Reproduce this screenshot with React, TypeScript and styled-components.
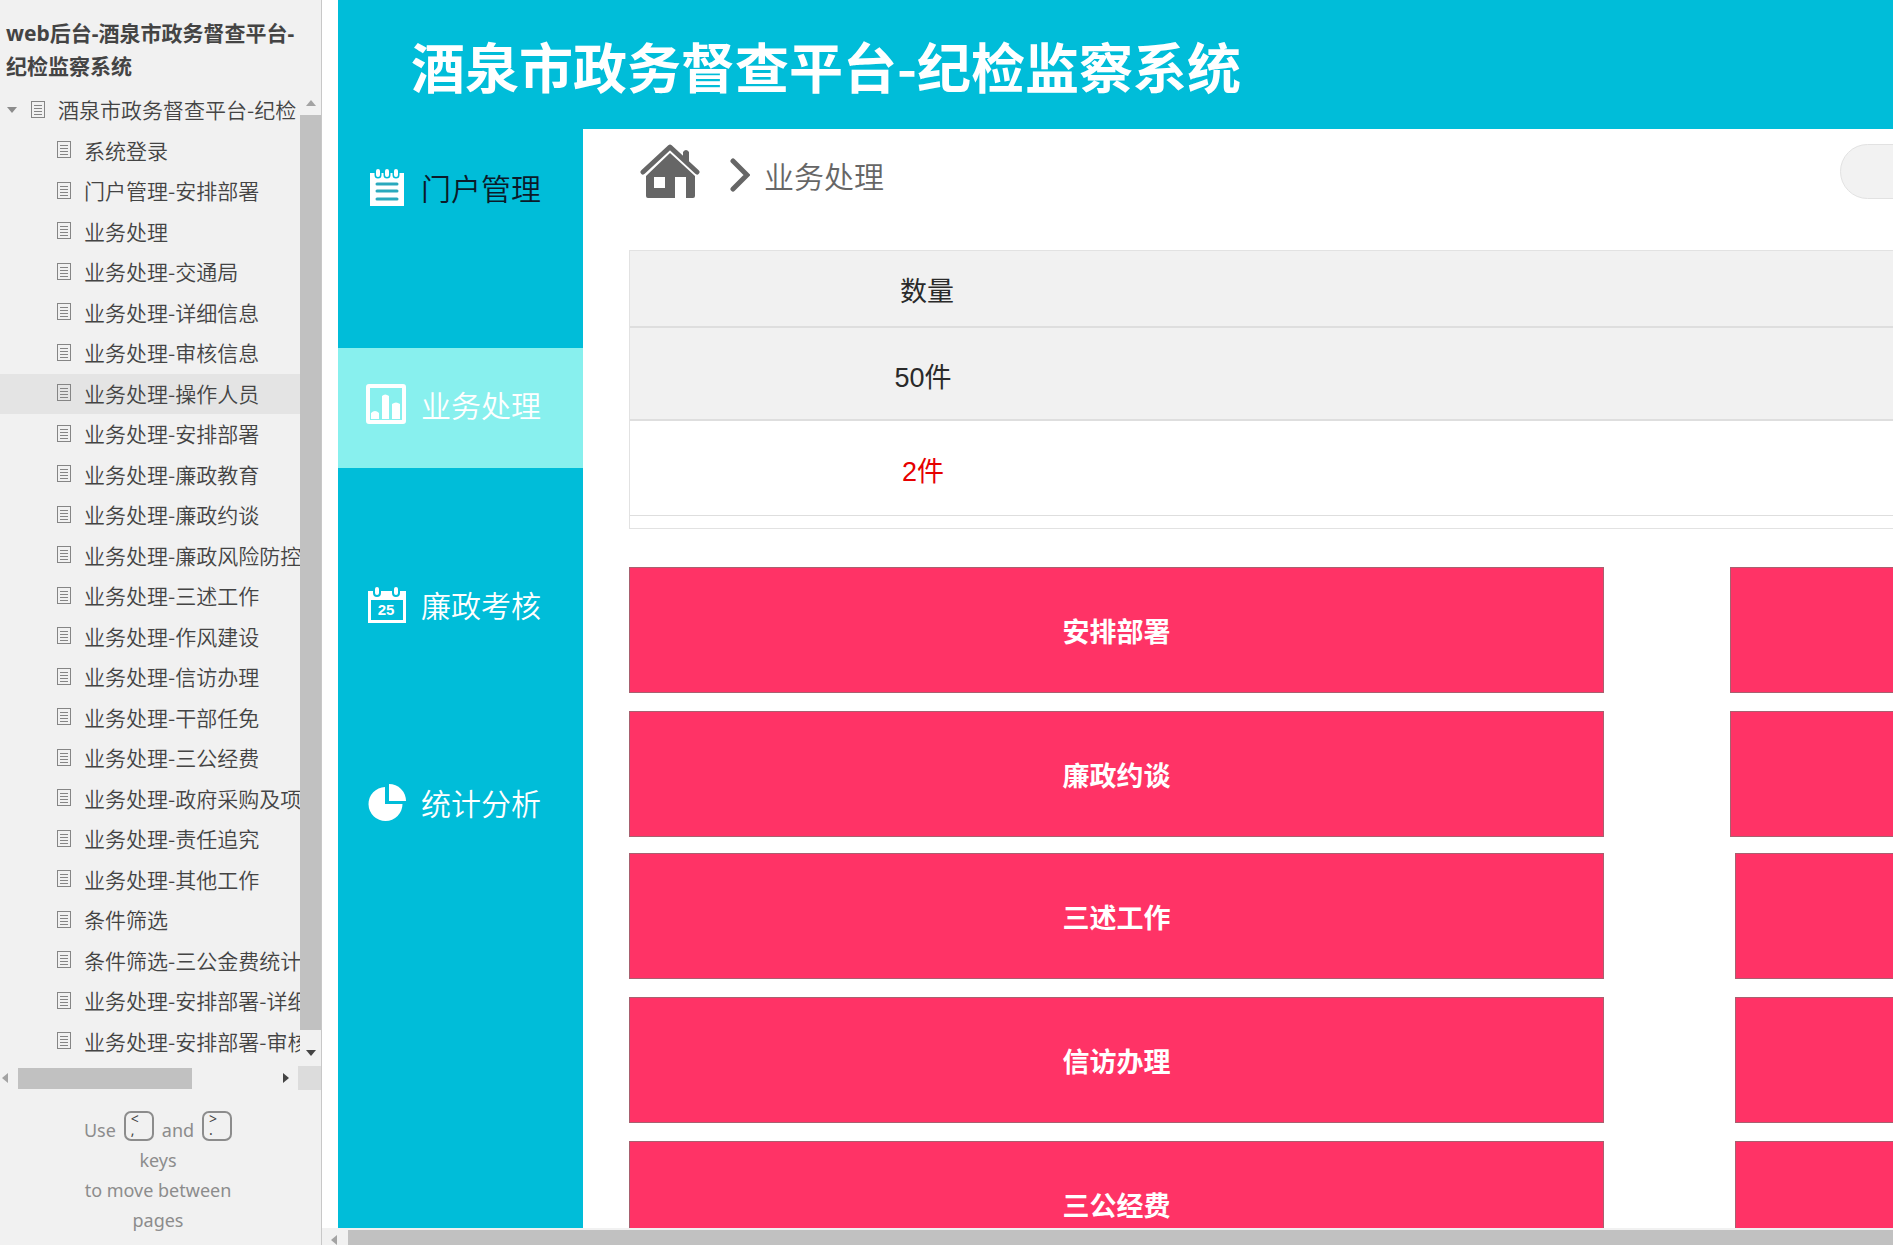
import React from 'react';
import styled, { createGlobalStyle } from 'styled-components';

const ui = '"Noto Sans", "Noto Sans CJK SC", sans-serif';
const cjk = '"Noto Sans CJK SC", sans-serif';
const teal = '#00bdd9';

const GlobalStyle = createGlobalStyle`
  *, *::before, *::after { box-sizing: border-box; }
  body { margin: 0; background: #fff; font-family: ${ui}; overflow: hidden; }
  h1, h2, ul, p { margin: 0; padding: 0; }
  ul { list-style: none; }
  a { color: inherit; text-decoration: none; }
  button { margin: 0; padding: 0; border: 0; background: none; font: inherit; color: inherit; }
  svg { display: block; flex: none; }
`;

const Shell = styled.div`
  display: flex;
  height: 100vh;
`;

/* ---------- sitemap sidebar ---------- */

const Sidebar = styled.aside`
  display: flex;
  flex: none;
  flex-direction: column;
  width: 322px;
  border-right: 1px solid #c8c8c8;
  background: #f1f1f1;
`;

const ProjectName = styled.h2`
  padding: 17px 6px 7px;
  font-size: 21px;
  line-height: 33px;
  color: #444;
`;

const TreePane = styled.div`
  display: flex;
  flex: 1;
  min-height: 0;
`;

const Tree = styled.ul`
  display: flex;
  flex: 1;
  flex-direction: column;
  min-width: 0;
  padding-bottom: 4px;
  overflow: hidden;
`;

const TreeRow = styled.li<{ $root?: boolean; $hover?: boolean }>`
  display: flex;
  flex: 1;
  align-items: center;
  min-height: 0;
  padding-left: ${(p) => (p.$root ? '7px' : '57px')};
  background: ${(p) => (p.$hover ? '#e4e4e4' : 'transparent')};
`;

const Toggle = styled.button`
  width: 24px;
`;

const TreeLink = styled.a`
  display: flex;
  align-items: center;
  gap: 13px;
  padding-bottom: 2px;
  font-family: ${cjk};
  font-size: 21px;
  line-height: 32px;
  font-weight: 350;
  white-space: nowrap;
  color: #444;
`;

const VTrack = styled.div`
  display: flex;
  flex: none;
  flex-direction: column;
  align-items: center;
  justify-content: space-between;
  width: 21px;
  padding: 10px 0;
`;

const VThumb = styled.div`
  flex: 1;
  width: 21px;
  margin: 9px 0 20px;
  background: #c1c1c1;
`;

const HTrack = styled.div`
  display: flex;
  flex: none;
  align-items: center;
  height: 24px;
  padding-left: 2px;
`;

const HThumb = styled.div`
  width: 174px;
  height: 21px;
  margin: 0 auto 0 10px;
  background: #c1c1c1;
`;

const Corner = styled.div`
  width: 23px;
  height: 24px;
  margin-left: 9px;
  background: #dcdcdc;
`;

const KeyHint = styled.p`
  padding: 17px 61px 10px 56px;
  font-size: 18px;
  line-height: 30px;
  text-align: center;
  color: #8c8c8c;
`;

const HintKeys = styled.span`
  display: flex;
  align-items: center;
  justify-content: center;
  gap: 8px;
  height: 38px;
`;

const HintWord = styled.span`
  padding-top: 8px;
`;

const Key = styled.kbd`
  display: flex;
  flex-direction: column;
  justify-content: space-between;
  width: 30px;
  height: 30px;
  padding: 1px 5px 4px;
  border: 2px solid #8c8c8c;
  border-radius: 7px;
  font-family: ${ui};
  font-size: 14px;
  line-height: 10px;
  text-align: left;
  color: #444;
`;

/* ---------- prototype page ---------- */

const Main = styled.main`
  display: flex;
  flex: 1;
  flex-direction: column;
  min-width: 0;
`;

const Viewport = styled.div`
  flex: 1;
  min-height: 0;
  padding-left: 16px;
  overflow: hidden;
`;

const Canvas = styled.div`
  display: flex;
  flex-direction: column;
  width: 180%;
  min-height: 100%;
`;

const Banner = styled.header`
  padding: 29px 73px 26px;
  background: ${teal};
`;

const BannerTitle = styled.h1`
  font-family: ${cjk};
  font-size: 54px;
  line-height: 74px;
  font-weight: 700;
  white-space: nowrap;
  color: #fff;
`;

const Body = styled.div`
  display: flex;
  flex: 1;
`;

const Nav = styled.nav`
  flex: none;
  width: 245px;
  background: ${teal};
`;

const NavList = styled.ul`
  display: flex;
  flex-direction: column;
  gap: 78px;
`;

const NavItem = styled.li<{ $active?: boolean }>`
  background: ${(p) => (p.$active ? '#88f0ee' : 'transparent')};

  &:first-child { margin-bottom: 21px; }
`;

const NavLink = styled.a<{ $dark?: boolean; $active?: boolean }>`
  display: flex;
  align-items: center;
  gap: 15px;
  height: 120px;
  padding: 0 0 ${(p) => (p.$active ? '8px' : '4px')} 28px;
  font-family: ${cjk};
  font-size: 30px;
  line-height: 40px;
  font-weight: 350;
  color: ${(p) => (p.$dark ? '#0b1a2a' : '#fff')};
`;

const Content = styled.section`
  flex: 1;
  min-width: 0;
  padding-left: 46px;
`;

const TopRow = styled.div`
  display: flex;
  align-items: flex-start;
  height: 121px;
  padding: 15px 0 0 11px;
`;

const Crumbs = styled.div`
  display: flex;
  align-items: flex-start;
  gap: 14px;
  width: 1200px;
  font-family: ${cjk};
  font-size: 30px;
  line-height: 54px;
  color: #666;
`;

const CrumbText = styled.span`
  display: flex;
  align-items: center;
  gap: 14px;
  padding-top: 4px;
  font-weight: 350;
`;

const HomeLink = styled.a`
  margin-right: 16px;
`;

const Search = styled.input`
  width: 420px;
  height: 55px;
  padding: 0 24px;
  border: 1px solid #e2e2e2;
  border-radius: 28px;
  background: #f2f2f2;
  font: 22px ${ui};
`;

const Table = styled.table`
  width: 100%;
  border: 1px solid #e2e2e2;
  border-spacing: 0;
  table-layout: fixed;
  font-family: "Liberation Sans", "Noto Sans CJK SC", sans-serif;
  font-size: 27px;
  line-height: 36px;
  text-align: center;
  color: #2a2a2a;
`;

const CountCol = styled.col`
  width: 586px;
`;

const HeadCell = styled.th`
  height: 77px;
  padding: 6px 0 0 8px;
  border-bottom: 2px solid #dedede;
  background: #f1f1f1;
  font-weight: 400;
`;

const Cell = styled.td<{ $tone?: 'shaded' | 'alert' }>`
  height: ${(p) => (p.$tone === 'shaded' ? '93px' : '95px')};
  padding: 8px 0 0;
  border-bottom: ${(p) => (p.$tone === 'shaded' ? '2px' : '1px')} solid #dedede;
  background: ${(p) => (p.$tone === 'shaded' ? '#f1f1f1' : '#fff')};
  color: ${(p) => (p.$tone === 'alert' ? '#e60000' : 'inherit')};
`;

const TailCell = styled.td`
  height: 12px;
  padding: 0;
`;

const Groups = styled.div`
  display: flex;
  flex-direction: column;
  gap: 16px;
  padding-top: 38px;
`;

const CardGroup = styled.div<{ $gap: number }>`
  display: grid;
  grid-template-columns: 975px 975px;
  gap: 18px ${(p) => p.$gap}px;
`;

const Card = styled.button`
  height: 126px;
  padding-top: 2px;
  border: 1px solid #a8606f;
  background: #ff3366;
  font-family: ${cjk};
  font-size: 27px;
  line-height: 36px;
  font-weight: 700;
  color: #fff;
`;

const PageTrack = styled.div`
  display: flex;
  flex: none;
  align-items: flex-end;
  gap: 11px;
  height: 17px;
  padding-left: 9px;
  background: #f1f1f1;
`;

const PageThumb = styled.div`
  flex: 1;
  height: 15px;
  background: #c1c1c1;
`;

/* ---------- drawings ---------- */

const Arrow = ({ dir, color }: { dir: 'up' | 'down' | 'left' | 'right'; color: string }) => {
  const flat = dir === 'up' || dir === 'down';
  const points = {
    up: '0,6 10,6 5,0',
    down: '0,0 10,0 5,6',
    left: '6,0 6,10 0,5',
    right: '0,0 0,10 6,5',
  }[dir];
  return (
    <svg width={flat ? 10 : 6} height={flat ? 6 : 10} aria-hidden="true">
      <polygon points={points} fill={color} />
    </svg>
  );
};

const PageIcon = () => (
  <svg width="14" height="17" viewBox="0 0 14 17" fill="none" stroke="#858585" aria-hidden="true">
    <rect x="0.5" y="0.5" width="13" height="16" />
    <path d="M3 4.5h8M3 7.5h8M3 10.5h8M3 13.5h8" />
  </svg>
);

const NotepadIcon = () => (
  <svg width="40" height="40" viewBox="0 0 40 40" aria-hidden="true">
    <path fill="#fff" d="M4 6h34v33H4z" />
    <g stroke={teal} strokeWidth="7" strokeLinecap="round">
      <path d="M12 4v4M21 4v4M30 4v4" />
    </g>
    <g stroke="#fff" strokeWidth="4" strokeLinecap="round">
      <path d="M12 4v4M21 4v4M30 4v4" />
    </g>
    <path stroke="#2aa9bd" strokeWidth="3" strokeLinecap="round" d="M11 17h20M11 24h20M11 32h20" />
  </svg>
);

const ChartIcon = () => (
  <svg width="40" height="40" viewBox="0 0 40 40" aria-hidden="true">
    <rect x="2" y="2" width="36" height="36" rx="1" fill="none" stroke="#fff" strokeWidth="4" />
    <path fill="#fff" d="M5 29q4-4 8 0v6H5zM16 12q3-3 7 0v23h-7zM26 20q4-3 8 0v15h-8z" />
  </svg>
);

const CalendarIcon = () => (
  <svg width="40" height="40" viewBox="0 0 40 40" aria-hidden="true">
    <path fill="#fff" fillRule="evenodd" d="M2 7h38v32H2zM5 16v20h32V16z" />
    <path stroke={teal} strokeWidth="8" strokeLinecap="round" d="M11 5v4M30 5v4" />
    <path stroke="#fff" strokeWidth="4" strokeLinecap="round" d="M11 5v4M30 5v4" />
    <text x="20" y="31" textAnchor="middle" fontFamily="Liberation Sans, sans-serif" fontSize="15" fontWeight="700" fill="#fff">
      25
    </text>
  </svg>
);

const PieIcon = () => (
  <svg width="40" height="40" viewBox="0 0 40 40" aria-hidden="true">
    <path fill="#fff" d="M19 5v17h17.500A17 17 0 1 1 19 5z" />
    <path fill="#fff" d="M23 2a17 17 0 0 1 17 17H23z" />
  </svg>
);

const HomeIcon = () => (
  <svg width="60" height="54" viewBox="0 0 60 54" aria-hidden="true">
    <path fill="none" stroke="#666" strokeWidth="5" strokeLinecap="round" strokeLinejoin="round" d="M3 28L30 3l27 25" />
    <path fill="#666" d="M43 13V8q3-4 6 0v11z" />
    <path fill="#666" fillRule="evenodd" d="M30 9l25 23v20q0 2-2 2h-7V33H35v21H8q-2 0-2-2V32zM14 33v11h11V33z" />
  </svg>
);

const Chevron = () => (
  <svg width="20" height="34" viewBox="0 0 20 34" aria-hidden="true">
    <path fill="none" stroke="#666" strokeWidth="5" strokeLinecap="round" d="M3 3l14 14L3 31" />
  </svg>
);

/* ---------- data ---------- */

const pages = [
  '系统登录',
  '门户管理-安排部署',
  '业务处理',
  '业务处理-交通局',
  '业务处理-详细信息',
  '业务处理-审核信息',
  '业务处理-操作人员',
  '业务处理-安排部署',
  '业务处理-廉政教育',
  '业务处理-廉政约谈',
  '业务处理-廉政风险防控',
  '业务处理-三述工作',
  '业务处理-作风建设',
  '业务处理-信访办理',
  '业务处理-干部任免',
  '业务处理-三公经费',
  '业务处理-政府采购及项',
  '业务处理-责任追究',
  '业务处理-其他工作',
  '条件筛选',
  '条件筛选-三公金费统计',
  '业务处理-安排部署-详细',
  '业务处理-安排部署-审核',
];

const navItems = [
  { label: '门户管理', Icon: NotepadIcon, dark: true },
  { label: '业务处理', Icon: ChartIcon, active: true },
  { label: '廉政考核', Icon: CalendarIcon },
  { label: '统计分析', Icon: PieIcon },
];

const cardGroups = [
  { gap: 126, cards: ['安排部署', '廉政约谈'] },
  { gap: 131, cards: ['三述工作', '信访办理', '三公经费'] },
];

export default function App() {
  return (
    <>
      <GlobalStyle />
      <Shell>
        <Sidebar>
          <ProjectName>web后台-酒泉市政务督查平台-纪检监察系统</ProjectName>
          <TreePane>
            <Tree>
              <TreeRow $root>
                <Toggle aria-label="折叠">
                  <Arrow dir="down" color="#8c8c8c" />
                </Toggle>
                <TreeLink href="#home">
                  <PageIcon />
                  酒泉市政务督查平台-纪检
                </TreeLink>
              </TreeRow>
              {pages.map((name) => (
                <TreeRow key={name} $hover={name === '业务处理-操作人员'}>
                  <TreeLink href={`#${name}`}>
                    <PageIcon />
                    {name}
                  </TreeLink>
                </TreeRow>
              ))}
            </Tree>
            <VTrack>
              <Arrow dir="up" color="#a3a3a3" />
              <VThumb />
              <Arrow dir="down" color="#444" />
            </VTrack>
          </TreePane>
          <HTrack>
            <Arrow dir="left" color="#a3a3a3" />
            <HThumb />
            <Arrow dir="right" color="#444" />
            <Corner />
          </HTrack>
          <KeyHint>
            <HintKeys>
              <HintWord>Use</HintWord>
              <Key>
                <span>&lt;</span>
                <span>,</span>
              </Key>
              <HintWord>and</HintWord>
              <Key>
                <span>&gt;</span>
                <span>.</span>
              </Key>
            </HintKeys>
            keys
            <br />
            to move between
            <br />
            pages
          </KeyHint>
        </Sidebar>

        <Main>
          <Viewport>
            <Canvas>
              <Banner>
                <BannerTitle>酒泉市政务督查平台-纪检监察系统</BannerTitle>
              </Banner>
              <Body>
                <Nav>
                  <NavList>
                    {navItems.map(({ label, Icon, dark, active }) => (
                      <NavItem key={label} $active={active}>
                        <NavLink href={`#${label}`} $dark={dark} $active={active}>
                          <Icon />
                          {label}
                        </NavLink>
                      </NavItem>
                    ))}
                  </NavList>
                </Nav>
                <Content>
                  <TopRow>
                    <Crumbs>
                      <HomeLink href="#home" aria-label="首页">
                        <HomeIcon />
                      </HomeLink>
                      <CrumbText>
                        <Chevron />
                        业务处理
                      </CrumbText>
                    </Crumbs>
                    <Search type="search" aria-label="搜索" />
                  </TopRow>
                  <Table>
                    <colgroup>
                      <CountCol />
                      <col />
                    </colgroup>
                    <thead>
                      <tr>
                        <HeadCell scope="col">数量</HeadCell>
                        <HeadCell />
                      </tr>
                    </thead>
                    <tbody>
                      <tr>
                        <Cell $tone="shaded">50件</Cell>
                        <Cell $tone="shaded" />
                      </tr>
                      <tr>
                        <Cell $tone="alert">2件</Cell>
                        <Cell />
                      </tr>
                      <tr>
                        <TailCell colSpan={2} />
                      </tr>
                    </tbody>
                  </Table>
                  <Groups>
                    {cardGroups.map(({ gap, cards }) => (
                      <CardGroup key={gap} $gap={gap}>
                        {cards.map((label) => (
                          <React.Fragment key={label}>
                            <Card>{label}</Card>
                            <Card aria-hidden="true" tabIndex={-1} />
                          </React.Fragment>
                        ))}
                      </CardGroup>
                    ))}
                  </Groups>
                </Content>
              </Body>
            </Canvas>
          </Viewport>
          <PageTrack>
            <Arrow dir="left" color="#a3a3a3" />
            <PageThumb />
          </PageTrack>
        </Main>
      </Shell>
    </>
  );
}
